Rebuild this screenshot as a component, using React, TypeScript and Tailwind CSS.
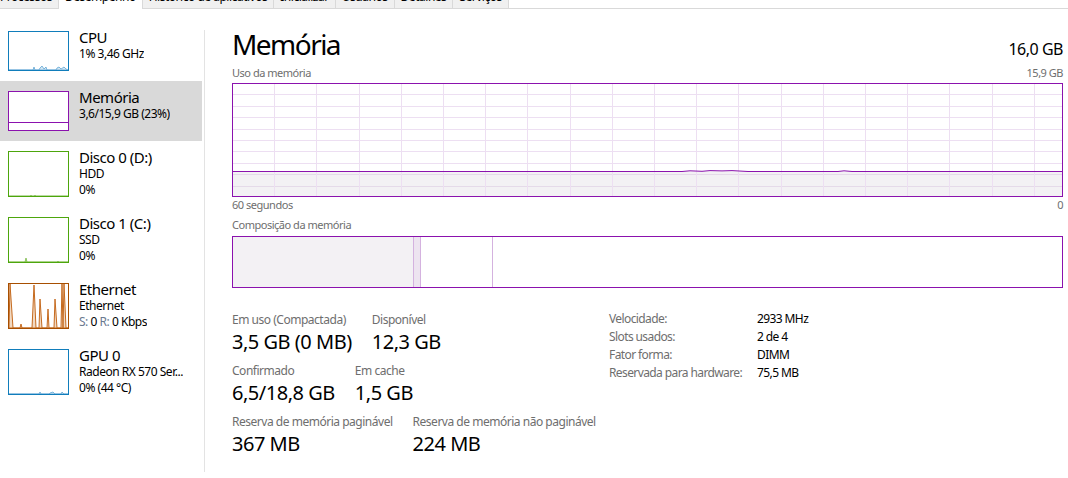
import React from 'react';

const PURPLE = '#8b12ae';

const tabs = [
  { label: 'Processos', first: true },
  { label: 'Desempenho', active: true },
  { label: 'Histórico de aplicativos' },
  { label: 'Inicializar' },
  { label: 'Usuários' },
  { label: 'Detalhes' },
  { label: 'Serviços' },
];

function Thumb({ kind, tall }: { kind: string; tall?: boolean }) {
  const h = tall ? 44 : 38;
  const border =
    kind === 'cpu' || kind === 'gpu'
      ? 'border-[#117dbb]'
      : kind === 'mem'
        ? 'border-[#8b12ae]'
        : kind === 'disk0' || kind === 'disk1'
          ? 'border-[#4da60c]'
          : 'border-[#a74f01]';
  return (
    <div className={`mt-[10px] w-[61px] shrink-0 border bg-white ${border} ${tall ? 'h-[46px]' : 'h-[40px]'}`}>
      <svg width="59" height={h} viewBox={`0 0 59 ${h}`} className="block">
        {kind === 'cpu' && (
          <path
            d={`M0,${h} L24,${h} L25,${h - 3} L26,${h} L30,${h} L31,${h - 2} L33,${h - 4} L35,${h - 1} L37,${h - 3} L38,${h} L47,${h} L48,${h - 2} L50,${h - 3} L52,${h - 1} L55,${h - 3} L57,${h - 1} L59,${h} Z`}
            fill="#d4e7f3"
            stroke="#5ea5d3"
            strokeWidth="0.8"
          />
        )}
        {kind === 'gpu' && (
          <path
            d={`M0,${h} L30,${h} L31,${h - 2} L32,${h} L40,${h} L41,${h - 1} L44,${h - 2} L46,${h} L52,${h} L53,${h - 2} L55,${h} L59,${h} Z`}
            fill="#d4e7f3"
            stroke="#5ea5d3"
            strokeWidth="0.8"
          />
        )}
        {kind === 'mem' && (
          <line x1="0" x2="59" y1="30.5" y2="30.5" stroke={PURPLE} strokeWidth="1" />
        )}
        {kind === 'disk0' && (
          <path d={`M0,${h} L21,${h} L22,${h - 1} L23,${h} L25,${h} L26,${h - 1} L27,${h} L59,${h} Z`} fill="#a6d27f" stroke="#7dbb4a" strokeWidth="0.6" />
        )}
        {kind === 'disk1' && (
          <path d={`M0,${h} L16,${h} L17,${h - 4} L18,${h} L48,${h} L49,${h - 1} L50,${h} L59,${h} Z`} fill="#a6d27f" stroke="#7dbb4a" strokeWidth="0.8" />
        )}
        {kind === 'eth' && (
          <path
            d="M0,44 L1,0 L4,44 L11,44 L12,40 L13,44 L23,44 L25,1 L27,44 L30,44 L31,15 L33,44 L38,44 L39,25 L40,44 L45,44 L46,15 L48,44 L52,44 L53,0 L54,44 L55,0 L57,44 L59,44 Z"
            fill="#f1d9c2"
            stroke="#c56a1f"
            strokeWidth="1"
            strokeLinejoin="round"
          />
        )}
      </svg>
    </div>
  );
}

function SideItem({
  kind,
  title,
  lines,
  active,
  tall,
}: {
  kind: string;
  title: string;
  lines: React.ReactNode[];
  active?: boolean;
  tall?: boolean;
}) {
  return (
    <div className={`flex w-[202px] pl-2 ${tall ? 'h-[66px]' : 'h-[60px]'} ${active ? 'bg-[#d9d9d9]' : ''}`}>
      <Thumb kind={kind} tall={tall} />
      <div className="ml-[10px] min-w-0 pt-[7px] text-black">
        <div className="text-[15px] leading-[18px]">{title}</div>
        {lines.map((l, i) => (
          <div key={i} className="truncate text-[12px] leading-[16px] tracking-[-0.04em]">
            {l}
          </div>
        ))}
      </div>
    </div>
  );
}

function UsageChart() {
  const cols = Array.from({ length: 19 }, (_, i) => Math.round((i + 1) * 42.2) + 0.5);
  const rows = Array.from({ length: 9 }, (_, i) => Math.round((i + 1) * 11.4) + 0.5);
  return (
    <svg width="831" height="114" viewBox="0 0 831 114" className="block">
      <rect x="0" y="88" width="831" height="26" fill="#f3f1f4" />
      {rows.map((y) => (
        <line key={`r${y}`} x1="0" x2="831" y1={y} y2={y} stroke={y > 88 ? '#e5dae9' : '#eddff2'} strokeWidth="1" />
      ))}
      {cols.map((x) => (
        <line key={`c${x}`} x1={x} x2={x} y1="0" y2="114" stroke="#eddff2" strokeWidth="1" />
      ))}
      <path
        d="M0,88.5 L450,88.5 L458,87.8 L470,88.3 L478,87.6 L490,87.9 L500,87.6 L516,88.5 L606,88.5 L612,87.8 L620,88.5 L831,88.5"
        fill="none"
        stroke={PURPLE}
        strokeWidth="1"
      />
      <rect x="0.5" y="0.5" width="830" height="113" fill="none" stroke={PURPLE} strokeWidth="1" />
    </svg>
  );
}

function CompositionBar() {
  return (
    <svg width="831" height="52" viewBox="0 0 831 52" className="block">
      <rect x="0" y="0" width="181" height="52" fill="#f3f1f4" />
      <rect x="181" y="0" width="7" height="52" fill="#ede4f0" />
      <line x1="181.5" x2="181.5" y1="0" y2="52" stroke="#d4b2df" strokeWidth="1" />
      <line x1="188.5" x2="188.5" y1="0" y2="52" stroke="#d4b2df" strokeWidth="1" />
      <line x1="260.5" x2="260.5" y1="0" y2="52" stroke="#d4b2df" strokeWidth="1" />
      <rect x="0.5" y="0.5" width="830" height="51" fill="none" stroke={PURPLE} strokeWidth="1" />
    </svg>
  );
}

function Stat({ label, value }: { label: string; value: string }) {
  return (
    <div className="whitespace-nowrap">
      <div className="text-[12px] leading-[16px] text-[#6e6e6e]">{label}</div>
      <div className="text-[20px] leading-[28px] text-black">{value}</div>
    </div>
  );
}

export default function App() {
  return (
    <div className="flex h-[478px] w-[1068px] flex-col overflow-hidden bg-white font-['Noto_Sans',sans-serif] tracking-[-0.03em]">
      {/* abas cortadas no topo */}
      <div className="flex h-[9px] shrink-0 items-end overflow-hidden">
        {tabs.map((t) => (
          <div
            key={t.label}
            className={`h-[23px] shrink-0 whitespace-nowrap border-r border-[#d9d9d9] px-[6px] pt-[3px] text-[12px] leading-[16px] tracking-[-0.04em] text-black ${
              t.active ? 'bg-white' : 'border-b bg-[#f0f0f0]'
            } ${t.first ? '-ml-[6px]' : ''}`}
          >
            {t.label}
          </div>
        ))}
        <div className="h-[9px] flex-1 border-b border-[#d9d9d9]" />
      </div>

      <div className="flex min-h-0 flex-1">
        {/* lista lateral */}
        <div className="w-[204px] shrink-0 pt-[12px]">
          <SideItem kind="cpu" title="CPU" lines={['1%  3,46 GHz']} />
          <SideItem kind="mem" title="Memória" lines={['3,6/15,9 GB (23%)']} active />
          <SideItem kind="disk0" title="Disco 0 (D:)" lines={['HDD', '0%']} tall />
          <SideItem kind="disk1" title="Disco 1 (C:)" lines={['SSD', '0%']} tall />
          <SideItem
            kind="eth"
            title="Ethernet"
            lines={[
              'Ethernet',
              <>
                <span className="text-[#6b7a90]">S:</span> 0 <span className="text-[#6b7a90]">R:</span> 0 Kbps
              </>,
            ]}
            tall
          />
          <SideItem kind="gpu" title="GPU 0" lines={['Radeon RX 570 Ser...', '0% (44 °C)']} tall />
        </div>
        <div className="mb-[6px] mt-[21px] w-px shrink-0 bg-[#e3e3e3]" />

        {/* painel principal */}
        <div className="ml-[27px] w-[831px] shrink-0 pt-[18px]">
          <div className="flex h-[34px] items-baseline justify-between">
            <div className="text-[28px] leading-[34px] tracking-[-0.055em] text-black">Memória</div>
            <div className="text-[16px] leading-[20px] text-black">16,0 GB</div>
          </div>
          <div className="mt-[5px] flex h-[14px] justify-between text-[11px] leading-[14px] text-[#6e6e6e]">
            <span>Uso da memória</span>
            <span>15,9 GB</span>
          </div>
          <div className="mt-[3px]">
            <UsageChart />
          </div>
          <div className="mt-px flex justify-between text-[11px] leading-[14px] text-[#6e6e6e]">
            <span>60 segundos</span>
            <span>0</span>
          </div>
          <div className="mt-[6px] text-[11px] leading-[14px] text-[#6e6e6e]">Composição da memória</div>
          <div className="mt-[4px]">
            <CompositionBar />
          </div>

          <div className="mt-[24px] flex items-start">
            <div className="flex w-[377px] shrink-0 flex-col gap-[7px]">
              <div className="flex gap-5">
                <Stat label="Em uso (Compactada)" value="3,5 GB (0 MB)" />
                <Stat label="Disponível" value="12,3 GB" />
              </div>
              <div className="flex gap-5">
                <Stat label="Confirmado" value="6,5/18,8 GB" />
                <Stat label="Em cache" value="1,5 GB" />
              </div>
              <div className="flex gap-5">
                <Stat label="Reserva de memória paginável" value="367 MB" />
                <Stat label="Reserva de memória não paginável" value="224 MB" />
              </div>
            </div>
            <div className="-mt-[2px] grid grid-cols-[148px_auto] content-start whitespace-nowrap text-[12px] leading-[18px] tracking-[-0.05em]">
              <span className="text-[#6e6e6e]">Velocidade:</span>
              <span className="text-black">2933 MHz</span>
              <span className="text-[#6e6e6e]">Slots usados:</span>
              <span className="text-black">2 de 4</span>
              <span className="text-[#6e6e6e]">Fator forma:</span>
              <span className="text-black">DIMM</span>
              <span className="text-[#6e6e6e]">Reservada para hardware:</span>
              <span className="text-black">75,5 MB</span>
            </div>
          </div>
        </div>
      </div>
    </div>
  );
}
